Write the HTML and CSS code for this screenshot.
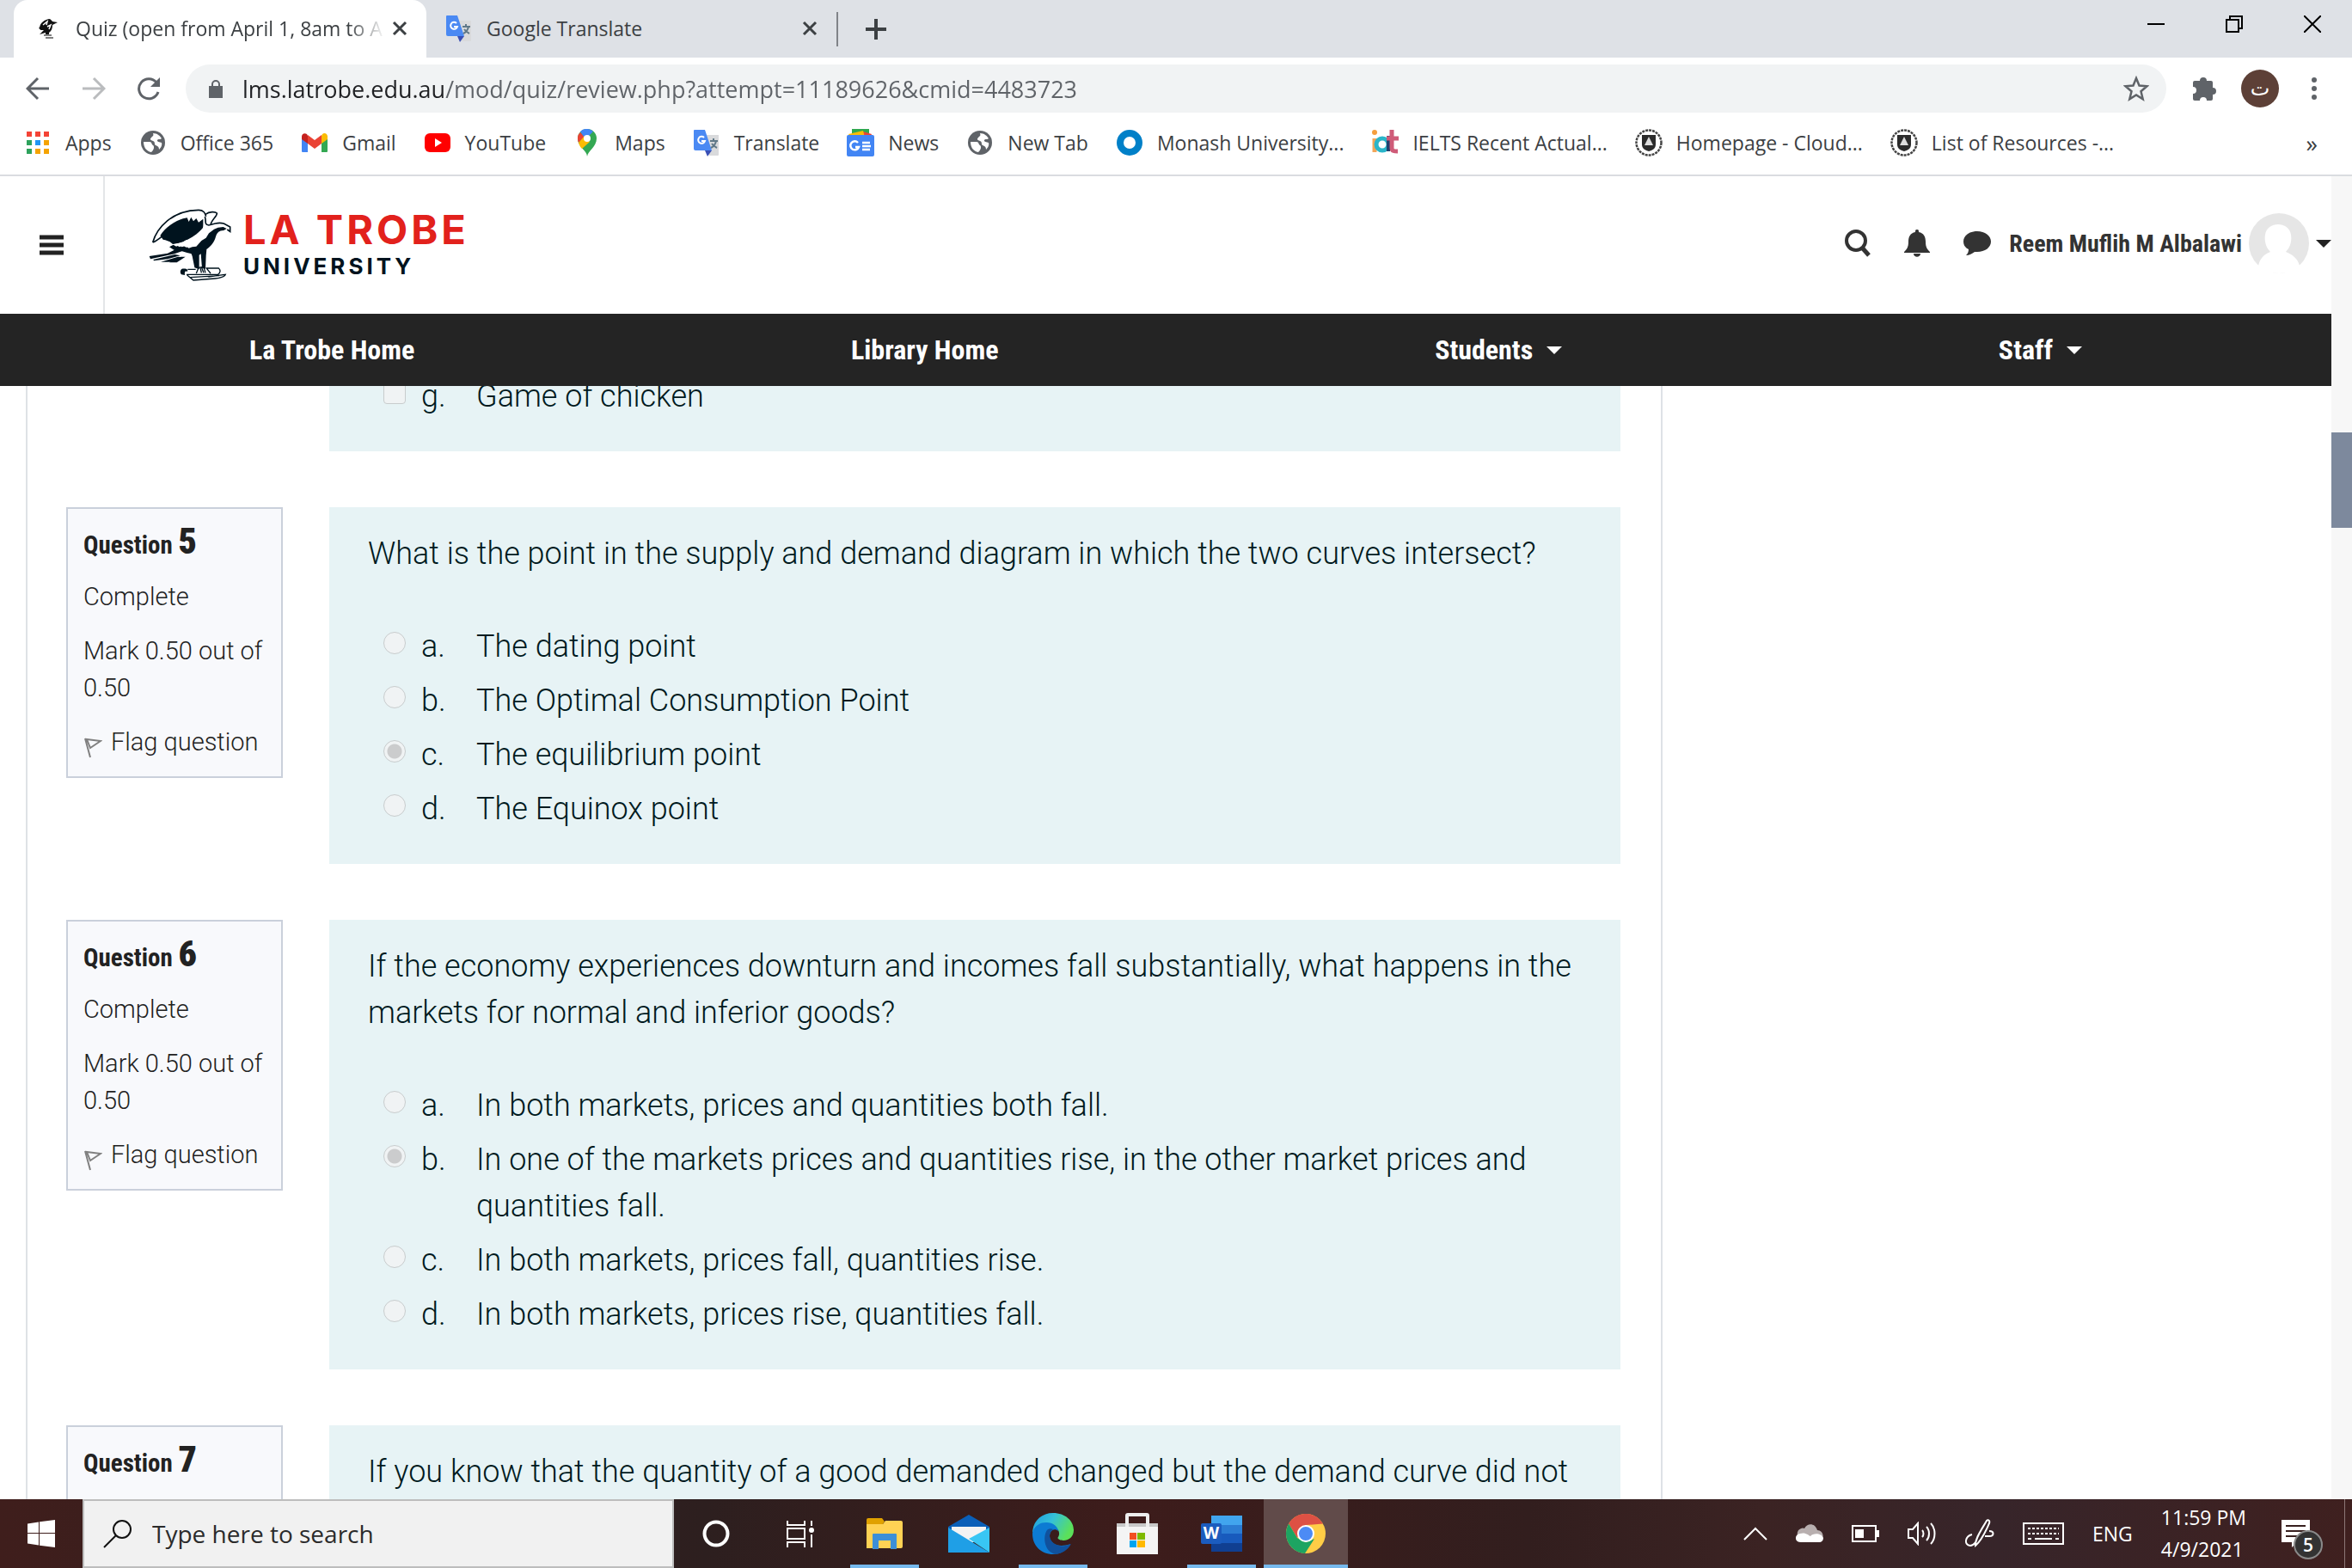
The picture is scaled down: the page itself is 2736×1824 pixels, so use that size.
FILE: index.html
```html
<!DOCTYPE html>
<html lang="en">
<head>
<meta charset="utf-8">
<title>Quiz (open from April 1, 8am to A</title>
<link rel="stylesheet" href="styles.css">
</head>
<body>
<svg class="defs" aria-hidden="true">
  <symbol id="i-close" viewBox="0 0 18 18"><path d="M2 2l14 14M16 2L2 16" stroke="currentColor" stroke-width="3" fill="none"/></symbol>
  <symbol id="i-translate" viewBox="0 0 32 32">
    <path d="M12 7h18v23a1 1 0 0 1-1 1H19z" fill="#d9dadc"/>
    <path d="M14 25h8l-5 7z" fill="#3a50b5"/>
    <path d="M2 1h12l8 24H3a2 2 0 0 1-2-2V2a1 1 0 0 1 1-1z" fill="#4a89f3"/>
    <path d="M20 14h9M24 11v3M27 14c-1 5-4 7-6 8M22 17c2 3 4 4 6 5" stroke="#607988" stroke-width="2" fill="none"/>
    <path d="M13 10a4 4 0 1 0 1 4h-4" stroke="#fff" stroke-width="2" fill="none"/>
  </symbol>
  <symbol id="i-globe" viewBox="0 0 28 28">
    <circle cx="14" cy="14" r="14" fill="#5f6368"/>
    <path d="M3 13h7c3 0 2 3 4 4s1 6-2 8C6 24 3 19 3 13zM14 3c5 0 8 3 10 6-2 2-4 0-5 2s3 2 5 3c1 3-1 6-3 8 0-4-2-4-4-5s0-4-3-5-4-2-2-4 3-2 2-5z" fill="#fff"/>
  </symbol>
  <symbol id="i-crest" viewBox="0 0 32 32">
    <circle cx="16" cy="16" r="14.500" fill="#fff" stroke="#444" stroke-width="2.500" stroke-dasharray="3 1"/>
    <path d="M8 7h16v11c0 5-4 7-8 8-4-1-8-3-8-8z" fill="#2b2b2b"/>
    <path d="M16 9l5 10H11z" fill="#ddd"/>
  </symbol>
  <symbol id="i-flag" viewBox="0 0 22 24"><path d="M2 1l6 22M4 2l16 2L8 12z" stroke="#808080" stroke-width="2" fill="none"/></symbol>
</svg>

<header class="tabstrip">
  <div class="tab tab-active">
    <svg class="favicon" width="24" height="24" viewBox="0 0 24 24"><path d="M2 11c1-6 6-9 11-10 2 0 3 2 4 3l6 1-6 3c0 4-1 7-4 9v2H9v-2l-7 2 5-5c-3 0-4 1-6-3z" fill="#111"/><path d="M7 20h9M9 23h9" stroke="#555" stroke-width="1.500"/><path d="M6 8l5-4-1 4M11 10l4-2-2 5" stroke="#fff" stroke-width="1.500" fill="none"/></svg>
    <span class="tab-title tab-title-fade">Quiz (open from April 1, 8am to A</span>
    <button class="icon-btn" aria-label="Close tab"><svg width="18" height="18"><use href="#i-close"/></svg></button>
  </div>
  <div class="tab">
    <svg width="32" height="32"><use href="#i-translate"/></svg>
    <span class="tab-title">Google Translate</span>
    <button class="icon-btn" aria-label="Close tab"><svg width="18" height="18"><use href="#i-close"/></svg></button>
  </div>
  <button class="icon-btn new-tab" aria-label="New tab"><svg width="24" height="24" viewBox="0 0 24 24"><path d="M12 0v24M0 12h24" stroke="#3c4043" stroke-width="4"/></svg></button>
  <div class="window-controls">
    <button class="icon-btn" aria-label="Minimize"><svg width="20" height="20" viewBox="0 0 20 20"><path d="M0 10h20" stroke="#000" stroke-width="2"/></svg></button>
    <button class="icon-btn" aria-label="Restore"><svg width="20" height="20" viewBox="0 0 20 20"><path d="M1 5h14v14H1zM5 5V1h14v14h-4" stroke="#000" stroke-width="2" fill="none"/></svg></button>
    <button class="icon-btn" aria-label="Close"><svg width="20" height="20" viewBox="0 0 20 20"><path d="M0 0l20 20M20 0L0 20" stroke="#000" stroke-width="2"/></svg></button>
  </div>
</header>

<div class="toolbar">
  <button class="icon-btn" aria-label="Back"><svg width="28" height="28" viewBox="0 0 28 28"><path d="M27 14H3M14 2L2 14l12 12" stroke="#5f6368" stroke-width="3" fill="none"/></svg></button>
  <button class="icon-btn" aria-label="Forward"><svg width="28" height="28" viewBox="0 0 28 28"><path d="M1 14h24M14 2l12 12-12 12" stroke="#babcbe" stroke-width="3" fill="none"/></svg></button>
  <button class="icon-btn" aria-label="Reload"><svg width="28" height="28" viewBox="0 0 28 28"><path d="M22 7a11.500 11.500 0 1 0 2 11" stroke="#5f6368" stroke-width="3" fill="none"/><path d="M26 1v11H15z" fill="#5f6368"/></svg></button>
  <div class="omnibox">
    <svg width="18" height="22" viewBox="0 0 18 22"><path d="M1 8h16v14H1z" fill="#5f6368"/><path d="M5 9V6a4 4 0 0 1 8 0v3" stroke="#5f6368" stroke-width="2" fill="none"/></svg>
    <input class="url" type="text" aria-label="Address" value="lms.latrobe.edu.au/mod/quiz/review.php?attempt=11189626&amp;cmid=4483723">
    <button class="icon-btn" aria-label="Bookmark this page"><svg width="30" height="30" viewBox="0 0 30 30"><path d="M15 3l3.500 8.500 9 .7-7 6 2.200 9L15 22.400 7.300 27.200l2.200-9-7-6 9-.7z" stroke="#5f6368" stroke-width="2.500" fill="none"/></svg></button>
  </div>
  <button class="icon-btn" aria-label="Extensions"><svg width="30" height="30" viewBox="0 0 30 30"><path d="M1 8a2 2 0 0 1 2-2h6a4 4 0 1 1 8 0h5a2 2 0 0 1 2 2v6a4 4 0 1 1 0 8v5a2 2 0 0 1-2 2h-5a4 4 0 0 0-8 0H3a2 2 0 0 1-2-2v-6a4 4 0 0 0 0-8z" fill="#5f6368"/></svg></button>
  <button class="profile" aria-label="Profile">ت</button>
  <button class="icon-btn" aria-label="Menu"><svg width="8" height="28" viewBox="0 0 8 28"><circle cx="4" cy="4" r="3" fill="#5f6368"/><circle cx="4" cy="14" r="3" fill="#5f6368"/><circle cx="4" cy="24" r="3" fill="#5f6368"/></svg></button>
</div>

<nav class="bookmarks" aria-label="Bookmarks">
  <a href="#"><svg width="32" height="32" viewBox="0 0 32 32"><path d="M3 3h6v6H3zM13 3h6v6h-6zM23 3h6v6h-6z" fill="#f44336"/><path d="M3 13h6v6H3zM3 23h6v6H3z" fill="#2ea25c"/><path d="M13 13h6v6h-6z" fill="#2196f3"/><path d="M23 13h6v6h-6zM13 23h6v6h-6zM23 23h6v6h-6z" fill="#f5a300"/></svg>Apps</a>
  <a href="#"><svg width="32" height="28"><use href="#i-globe"/></svg>Office 365</a>
  <a href="#"><svg width="32" height="32" viewBox="0 0 32 32"><path d="M1 8v18a1 1 0 0 0 1 1h6V13z" fill="#4285f4"/><path d="M24 13v14h6a1 1 0 0 0 1-1V8z" fill="#34a853"/><path d="M24 8v9l7-5V9c0-4-4-5-6-3z" fill="#fbbc04"/><path d="M1 9v3l7 5V8L7 6C4 4 1 6 1 9z" fill="#c5221f"/><path d="M8 17V7l8 6 8-6v10l-8 6z" fill="#ea4335"/></svg>Gmail</a>
  <a href="#"><svg width="32" height="32" viewBox="0 0 32 32"><rect x="1" y="5" width="30" height="22" rx="6" fill="#f00"/><path d="M13 11l8 5-8 5z" fill="#fff"/></svg>YouTube</a>
  <a href="#"><svg width="32" height="32" viewBox="0 0 32 32"><path d="M16 32c0-7-11-11-11-21a11 11 0 0 1 22 0c0 10-10 14-11 21z" fill="#34a853"/><path d="M6 16C4 10 5 7 8 4l5 5z" fill="#ea4335"/><path d="M8 3c5-5 12-3 15 0l-9 9z" fill="#4285f4"/><path d="M6 16l7-8 6 7-9 8c-2-2-3-4-4-7z" fill="#fbbc04"/><circle cx="16" cy="11" r="4" fill="#fff"/></svg>Maps</a>
  <a href="#"><svg width="32" height="32"><use href="#i-translate"/></svg>Translate</a>
  <a href="#"><svg width="32" height="32" viewBox="0 0 32 32"><path d="M6 0h20v8H6z" fill="#2fa84f"/><path d="M19 3l10 3-2 5H12z" fill="#ea4335"/><path d="M2 6l17-4 2 8H4z" fill="#fbbc04"/><rect y="7" width="32" height="25" rx="2" fill="#4285f4"/><path d="M13 16a5 5 0 1 0 1 5h-4M18 16h9M18 20h10M18 24h9" stroke="#fff" stroke-width="2.500" fill="none"/></svg>News</a>
  <a href="#"><svg width="32" height="28"><use href="#i-globe"/></svg>New Tab</a>
  <a href="#"><svg width="32" height="32" viewBox="0 0 32 32"><circle cx="16" cy="16" r="11" fill="none" stroke="#0080c8" stroke-width="8"/></svg>Monash University...</a>
  <a href="#"><svg width="32" height="32" viewBox="0 0 32 32"><path d="M4 11v16" stroke="#f2a65a" stroke-width="5"/><circle cx="4" cy="4" r="3" fill="#f59e3d"/><circle cx="13" cy="18" r="7" fill="none" stroke="#2ab5c9" stroke-width="5"/><path d="M20 8v18" stroke="#22406e" stroke-width="4"/><path d="M24 1v21c0 4 3 4 7 4M18 11h14" stroke="#cf5b78" stroke-width="5" fill="none"/></svg>IELTS Recent Actual...</a>
  <a href="#"><svg width="32" height="32"><use href="#i-crest"/></svg>Homepage - Cloud...</a>
  <a href="#"><svg width="32" height="32"><use href="#i-crest"/></svg>List of Resources -...</a>
  <button class="icon-btn more" aria-label="More bookmarks">»</button>
</nav>

<div class="viewport">
  <div class="page">
    <header class="site-header">
      <button class="menu-btn" aria-label="Side panel"><svg width="28" height="24" viewBox="0 0 28 24"><path d="M0 3h28M0 12h28M0 21h28" stroke="#222" stroke-width="5"/></svg></button>
      <a class="logo" href="#" aria-label="La Trobe University">
        <svg width="96" height="86" viewBox="24 20 288 258">
          <path d="M38 140C52 90 104 28 198 27c18 0 22 10 26 22M38 140c14-6 26-16 36-24M222 42c14-10 34-10 40-4 2 10-22 26-22 42M220 50c6 16-4 28 14 30l22-6c10-2 22-2 30 0l22 12v16l-10-7" fill="none" stroke="#00131e" stroke-width="5"/>
          <path d="M64 116C82 86 120 60 158 54l6 14 8-16 8 14 10-10 8 14 16-12 0 18c0 20-6 36-22 46-14 8-26 10-38 10l-12 8-20 4-14 2-10-8-16-6-8-2-8-12z" fill="#00131e"/>
          <path d="M96 156l14-8 10 6 10-4 10 6 12-4 12 8 12-4 14-2 18-20 16-10 10-16 18-14 14-6 18-2 12 6-10 6c-16 0-24 8-28 22-6 22-20 38-44 52l-30 10-26-6-20-6-26-4z" fill="#00131e"/>
          <path d="M100 148c40-4 84-24 116-62l22-4-6 20c-16 20-30 42-52 52l-16-4-8 8-14-8-10 6-12-6z" fill="#fff"/>
          <path d="M26 188l64-10 28-14 30 4-34 12-84 18zM40 200l76-18 18 4-44 12-48 6zM66 208l60-18 18 2-46 16zM96 210l40-20 16 0-30 20z" fill="#00131e"/>
          <path d="M170 172l56-8-2 22-2 46-12-2-4-50-6 4 0 50-16-6-8-40z" fill="#00131e"/>
          <path d="M190 248l8-20 10-2 8 20M204 228l4 18M216 226l6 20M224 228l16 20M160 234l28 0M226 230h42c8 6 6 16-2 22H156M158 254l22 18 76-6c20-2 34-8 36-14l-60 8M170 262l100-6" stroke="#00131e" stroke-width="4" fill="none"/>
          <path d="M140 232c20-2 22 6 18 10-6-4-10 0-8 12l-12-2c-6-8-4-16 2-20z" fill="#00131e"/>
        </svg>
        <span class="logo-text"><span class="logo-name">LA TROBE</span><span class="logo-sub">UNIVERSITY</span></span>
      </a>
      <div class="user-tools">
        <button class="icon-btn" aria-label="Search"><svg width="30" height="32" viewBox="0 0 30 32"><circle cx="13" cy="13" r="11" stroke="#333" stroke-width="4" fill="none"/><path d="M20 21l8 9" stroke="#333" stroke-width="5"/></svg></button>
        <button class="icon-btn" aria-label="Notifications"><svg width="30" height="32" viewBox="0 0 30 32"><path d="M15 0c2 0 2 1 2 3 6 1 8 6 8 11 0 7 2 9 5 12v1H0v-1c3-3 5-5 5-12 0-5 2-10 8-11 0-2 0-3 2-3zM11 28h8c0 5-8 5-8 0z" fill="#333"/></svg></button>
        <button class="icon-btn" aria-label="Messages"><svg width="32" height="28" viewBox="0 0 32 28"><path d="M16 0c9 0 16 5 16 12s-7 12-16 12h-3c-3 2-6 4-10 4 2-2 3-4 3-7-4-2-6-5-6-9C0 5 7 0 16 0z" fill="#333"/></svg></button>
        <button class="user-menu">Reem Muflih M Albalawi
          <svg width="70" height="70" viewBox="0 0 70 70"><circle cx="35" cy="35" r="35" fill="#e6e6e6"/><path d="M11 61c2-8 6-13 14-16-6-6-7-14-6-20 2-16 28-16 30 0 1 6 0 14-6 20 8 3 14 8 16 16-6 12-42 12-48 0z" fill="#fff"/></svg>
          <svg width="18" height="9" viewBox="0 0 18 9"><path d="M0 0h18L9 9z" fill="#222"/></svg>
        </button>
      </div>
    </header>
    <nav class="site-nav" aria-label="Site">
      <a href="#">La Trobe Home</a>
      <a href="#">Library Home</a>
      <a href="#">Students <svg width="18" height="9" viewBox="0 0 18 9"><path d="M0 0h18L9 9z" fill="#fff"/></svg></a>
      <a href="#">Staff <svg width="18" height="9" viewBox="0 0 18 9"><path d="M0 0h18L9 9z" fill="#fff"/></svg></a>
    </nav>
    <main class="quiz">
      <section class="questions">
        <article class="question question-cut">
          <div class="formulation">
            <div class="answer"><input type="checkbox" id="q4g" disabled><label for="q4g"><span>g.</span><span>Game of chicken</span></label></div>
          </div>
        </article>
        <article class="question">
          <aside class="info"><h3>Question <b>5</b></h3><p>Complete</p><p>Mark 0.50 out of 0.50</p><a href="#"><svg width="22" height="30"><use href="#i-flag"/></svg>Flag question</a></aside>
          <div class="formulation">
            <p>What is the point in the supply and demand diagram in which the two curves intersect?</p>
            <div class="answer"><input type="radio" name="q5" id="q5a" disabled><label for="q5a"><span>a.</span><span>The dating point</span></label></div>
            <div class="answer"><input type="radio" name="q5" id="q5b" disabled><label for="q5b"><span>b.</span><span>The Optimal Consumption Point</span></label></div>
            <div class="answer"><input type="radio" name="q5" id="q5c" disabled checked><label for="q5c"><span>c.</span><span>The equilibrium point</span></label></div>
            <div class="answer"><input type="radio" name="q5" id="q5d" disabled><label for="q5d"><span>d.</span><span>The Equinox point</span></label></div>
          </div>
        </article>
        <article class="question">
          <aside class="info"><h3>Question <b>6</b></h3><p>Complete</p><p>Mark 0.50 out of 0.50</p><a href="#"><svg width="22" height="30"><use href="#i-flag"/></svg>Flag question</a></aside>
          <div class="formulation">
            <p>If the economy experiences downturn and incomes fall substantially, what happens in the markets for normal and inferior goods?</p>
            <div class="answer"><input type="radio" name="q6" id="q6a" disabled><label for="q6a"><span>a.</span><span>In both markets, prices and quantities both fall.</span></label></div>
            <div class="answer"><input type="radio" name="q6" id="q6b" disabled checked><label for="q6b"><span>b.</span><span>In one of the markets prices and quantities rise, in the other market prices and quantities fall.</span></label></div>
            <div class="answer"><input type="radio" name="q6" id="q6c" disabled><label for="q6c"><span>c.</span><span>In both markets, prices fall, quantities rise.</span></label></div>
            <div class="answer"><input type="radio" name="q6" id="q6d" disabled><label for="q6d"><span>d.</span><span>In both markets, prices rise, quantities fall.</span></label></div>
          </div>
        </article>
        <article class="question question-last">
          <aside class="info"><h3>Question <b>7</b></h3></aside>
          <div class="formulation">
            <p>If you know that the quantity of a good demanded changed but the demand curve did not</p>
          </div>
        </article>
      </section>
    </main>
  </div>
  <div class="scrollbar"><div class="thumb"></div></div>
</div>

<footer class="taskbar">
  <button class="start" aria-label="Start"><svg width="32" height="32" viewBox="0 0 32 32"><path d="M0 4.500L13 2.500V15H0zM14 2.300L32 0v15H14zM0 16h13v13.500L0 27.500zM14 16h18v16l-18-2.300z" fill="#fff"/></svg></button>
  <label class="search">
    <svg width="34" height="34" viewBox="0 0 34 34"><circle cx="22" cy="12" r="10" stroke="#111" stroke-width="2" fill="none"/><path d="M15 19L1 33" stroke="#111" stroke-width="2"/></svg>
    <input type="text" placeholder="Type here to search" aria-label="Search">
  </label>
  <div class="apps">
    <button aria-label="Cortana"><svg width="32" height="32" viewBox="0 0 32 32"><circle cx="16" cy="16" r="13.500" stroke="#fff" stroke-width="4" fill="none"/></svg></button>
    <button aria-label="Task view"><svg width="32" height="32" viewBox="0 0 32 32"><path d="M1 1v5h20V1M1 10h20v12H1zM1 32v-6h20v6M29 1v6M29 17v15" stroke="#fff" stroke-width="2" fill="none"/><circle cx="29" cy="12" r="3" fill="#fff"/></svg></button>
    <button class="running" aria-label="File Explorer"><svg width="44" height="36" viewBox="0 0 44 36"><path d="M1 2a2 2 0 0 1 2-2h16l3 4-3 4H1z" fill="#e0a100"/><path d="M1 7h19l3-4h18a2 2 0 0 1 2 2v28a2 2 0 0 1-2 2H1z" fill="#ffd254"/><path d="M8 36V19a1 1 0 0 1 1-1h26a1 1 0 0 1 1 1v17h-7V26H15v10z" fill="#3c8fd8"/></svg></button>
    <button aria-label="Mail"><svg width="48" height="48" viewBox="0 0 48 48"><path d="M0 16L24 2l24 14v6H0z" fill="#0a5fb8"/><path d="M4 16h40v12L24 36 4 28z" fill="#f3f3f3"/><path d="M48 17v29L24 30z" fill="#38c6f4"/><path d="M0 17l48 29H0z" fill="#1f9fe6"/></svg></button>
    <button class="running" aria-label="Edge"><svg width="48" height="48" viewBox="0 0 48 48"><defs><linearGradient id="eg" x1="0" x2="1" y1="0" y2="0.400"><stop offset="0" stop-color="#1c9be0"/><stop offset=".5" stop-color="#35c1d8"/><stop offset="1" stop-color="#5be05a"/></linearGradient></defs><path d="M0 24C0 10 10 0 24 0s24 9 24 20c0 8-6 12-12 12-4 0-8-2-6-4 3-5 0-12-9-13C9 14 1 18 0 24z" fill="url(#eg)"/><path d="M0 24c1-8 8-13 16-13 9 0 14 6 14 10-4-4-10-1-10 6 0 9 11 14 24 9-4 8-12 12-20 12C10 48 0 38 0 24z" fill="#0c7bd3"/><path d="M18 19c-6 5-6 26 9 29 8-1 14-5 18-12-12 6-24 0-25-9 0-4 2-6 4-8-2-1-4-1-6 0z" fill="#10519d"/></svg></button>
    <button aria-label="Store"><svg width="48" height="48" viewBox="0 0 48 48"><path d="M0 12h48v6H0z" fill="#c8c8c8"/><path d="M12 16V3a1 1 0 0 1 1-1h22a1 1 0 0 1 1 1v13" stroke="#eee" stroke-width="4" fill="none"/><path d="M0 16h48v32H0z" fill="#f4f4f4"/><path d="M15 23h8v8h-8z" fill="#f25022"/><path d="M24 23h9v8h-9z" fill="#7fba00"/><path d="M15 32h8v8h-8z" fill="#00a4ef"/><path d="M24 32h9v8h-9z" fill="#ffb900"/></svg></button>
    <button class="running" aria-label="Word"><svg width="48" height="42" viewBox="0 0 48 42"><path d="M12 0h36v11H12z" fill="#41a5ee"/><path d="M12 11h36v10H12z" fill="#2b7cd3"/><path d="M12 21h36v11H12z" fill="#185abd"/><path d="M12 32h36v10H12z" fill="#103f91"/><rect y="9" width="24" height="24" rx="2" fill="#1b5cbe"/><text x="12" y="27" class="word-letter">W</text></svg></button>
    <button class="running active" aria-label="Chrome"><svg width="46" height="46" viewBox="0 0 46 46"><circle cx="23" cy="23" r="23" fill="#ffcd46"/><path d="M3.100 11.500A23 23 0 0 1 43 11.500L23 13 13 28z" fill="#dd5144"/><path d="M3.100 11.500A23 23 0 0 0 22 46l11-17-10 4-10-5z" fill="#1da462"/><circle cx="23" cy="23" r="10" fill="#fff"/><circle cx="23" cy="23" r="8" fill="#4c8bf5"/></svg></button>
  </div>
  <div class="tray">
    <button aria-label="Show hidden icons"><svg width="28" height="16" viewBox="0 0 28 16"><path d="M1 15L14 2l13 13" stroke="#fff" stroke-width="2" fill="none"/></svg></button>
    <button aria-label="OneDrive"><svg width="32" height="22" viewBox="0 0 32 22"><path d="M2 14C0 6 8 3 10 5c3-6 12-7 15 2 5 0 8 5 6 10z" fill="#b8afaf"/><path d="M6 21c-8 0-8-9-1-10 6-2 10 2 12 3 3-4 13-4 15 2 0 3-2 5-5 5z" fill="#fff"/></svg></button>
    <button aria-label="Battery"><svg width="32" height="20" viewBox="0 0 32 20"><path d="M1 1h27v18H1z" stroke="#fff" stroke-width="2" fill="none"/><path d="M4 5h10v10H4zM29 6h3v8h-3z" fill="#fff"/></svg></button>
    <button aria-label="Volume"><svg width="34" height="28" viewBox="0 0 34 28"><path d="M1 9h5l6-7v24l-6-7H1zM17 10c2 2 2 6 0 8M22 6c4 4 4 12 0 16M27 2c6 6 6 18 0 24" stroke="#fff" stroke-width="2" fill="none"/></svg></button>
    <button aria-label="Windows Ink"><svg width="34" height="34" viewBox="0 0 34 34"><path d="M12 31c-1-8 8-20 13-29 2-2 4 0 3 3-4 9-8 19-16 26zM8 18c-8 2-10 12-2 13 4 0 5-3 7-5M28 14c6 0 6 6 0 6h-5" stroke="#fff" stroke-width="2" fill="none"/></svg></button>
    <button aria-label="Touch keyboard"><svg width="48" height="26" viewBox="0 0 48 26"><path d="M1 1h46v24H1z" stroke="#fff" stroke-width="2" fill="none"/><path d="M6 7h36M6 13h36" stroke="#fff" stroke-width="2" stroke-dasharray="3 2"/><path d="M6 19h4M14 19h20M38 19h4" stroke="#fff" stroke-width="2"/></svg></button>
    <button class="lang">ENG</button>
    <button class="clock"><span>11:59 PM</span><span>4/9/2021</span></button>
    <button class="notify" aria-label="Notifications"><svg width="34" height="32" viewBox="0 0 34 32"><path d="M0 0h33v26H18l-6 6v-6H0z" fill="#fff"/><path d="M5 7h23M5 13h23M5 19h14" stroke="#38201f" stroke-width="2"/></svg><span class="badge">5</span></button>
  </div>
</footer>
</body>
</html>
```
FILE: styles.css
```css
* { box-sizing: border-box; }
body {
  margin: 0;
  height: 100vh;
  display: flex;
  flex-direction: column;
  overflow: hidden;
  background: #fff;
  font-family: "Open Sans", "Noto Sans", sans-serif;
  font-size: 23px;
  color: #3c4043;
}
button { border: 0; background: none; padding: 0; font: inherit; color: inherit; }
a { color: inherit; text-decoration: none; }
svg { flex: none; display: block; }
h3, p { margin: 0; }
.defs { position: absolute; width: 0; height: 0; }
.icon-btn { display: flex; align-items: center; justify-content: center; }

/* Tab strip */
.tabstrip { display: flex; height: 67px; background: #dee1e6; padding-left: 16px; flex: none; }
.tab { display: flex; align-items: center; width: 477px; padding: 0 22px 2px; }
.tab-active { width: 480px; background: #fff; border-radius: 16px 16px 0 0; padding: 0 22px 2px 28px; }
.tab-title { flex: 1; margin: 0 24px 0 16px; white-space: nowrap; }
.tab-active .tab-title { margin: 0 8px 0 20px; }
.tab-title-fade { mask-image: linear-gradient(90deg, #000 88%, transparent 100%); }
.new-tab { align-self: center; height: 40px; width: 90px; border-left: 2px solid #808388; }
.window-controls { margin-left: auto; display: flex; gap: 71px; padding: 18px 36px 0 0; align-items: flex-start; }

/* Toolbar */
.toolbar { display: flex; align-items: center; height: 72px; padding: 0 40px 0 30px; flex: none; gap: 37px; }
.omnibox { flex: 1; display: flex; align-items: center; height: 56px; border-radius: 28px; background: #f1f3f4; padding: 0 20px 0 26px; margin: 0 -7px 0 -9px; }
.url {
  flex: 1;
  margin-left: 22px;
  padding: 0;
  border: 0;
  font: inherit;
  font-size: 27px;
  color: transparent;
  background: linear-gradient(90deg, #202124 236px, #5f6368 236px);
  background-clip: text;
}
.profile { width: 44px; height: 44px; border-radius: 50%; background: #5d4037; color: #fff; margin-left: -10px; font-family: "DejaVu Sans", sans-serif; font-size: 24px; line-height: 36px; text-align: center; }

/* Bookmarks */
.bookmarks { display: flex; align-items: center; gap: 32px; height: 66px; padding: 0 40px 10px 28px; border-bottom: 2px solid #dadce0; flex: none; }
.bookmarks a { display: flex; align-items: center; gap: 16px; white-space: nowrap; }
.more { margin-left: auto; font-size: 27px; }

/* Web page */
.viewport { flex: 1; display: flex; min-height: 0; }
.page { flex: 1; min-width: 0; overflow: hidden; font-family: "Roboto Condensed", Roboto, sans-serif; }
.scrollbar { width: 24px; background: #f7f7f7; padding-top: 298px; }
.thumb { height: 111px; background: #7d899d; }
.site-header { display: flex; height: 160px; align-items: stretch; }
.menu-btn { width: 122px; border-right: 2px solid #e4e6e8; display: grid; place-items: center; }
.logo { display: flex; align-items: center; gap: 14px; padding-left: 51px; }
.logo-text { display: flex; flex-direction: column; font-family: Inter, sans-serif; font-weight: 700; gap: 6px; letter-spacing: 4px; }
.logo-name { font-size: 47px; line-height: 44px; color: #e2211c; }
.logo-sub { font-size: 26px; line-height: 30px; color: #00131e; }
.user-tools { margin-left: auto; display: flex; align-items: center; gap: 39px; padding-bottom: 4px; color: #333; }
.user-menu { display: flex; align-items: center; gap: 8px; font-size: 28px; font-weight: 700; margin-left: -18px; white-space: nowrap; }
.site-nav { position: relative; z-index: 1; display: flex; align-items: center; justify-content: space-between; height: 84px; padding: 0 290px; background: #242424; color: #fff; font-size: 32px; font-weight: 700; }
.site-nav a { display: flex; align-items: center; gap: 16px; }

/* The list is scrolled, so its first row starts under the site navigation */
.quiz { margin-top: -42px; padding-left: 30px; }
.questions { width: 71%; padding: 0 47px 0 45px; border: 2px solid #dee2e6; border-width: 0 2px; font-family: Roboto, sans-serif; font-weight: 300; display: flex; flex-direction: column; gap: 65px; }
.question { display: grid; grid-template-columns: 252px 1fr; gap: 54px; align-items: start; }
.question-cut .formulation { grid-column: 2; }
.question-last { align-items: stretch; }
.info { border: 2px solid #cad0db; background: #f8f9fc; padding: 23px 18px 18px; font-size: 29px; line-height: 43px; color: #222; display: flex; flex-direction: column; gap: 20px; }
.info h3 { font-family: "Roboto Condensed", Roboto, sans-serif; font-size: 29px; font-weight: 700; line-height: 38px; }
.info h3 b { font-size: 42px; line-height: 24px; }
.info a { display: flex; align-items: flex-end; gap: 10px; white-space: nowrap; }
.formulation { background: #e7f3f5; color: #001a1e; padding: 27px 45px 28px; font-size: 36px; line-height: 54px; }
.formulation p { margin-bottom: 54px; }
.answer { display: flex; align-items: flex-start; gap: 18px; padding-left: 18px; }
.answer + .answer { margin-top: 9px; }
.answer:last-child { margin-bottom: 9px; }
.answer input { appearance: none; flex: none; width: 26px; height: 26px; margin: 10px 0 0; border: 1px solid #c8cccd; background: #f0f3f4; border-radius: 4px; }
.answer input[type="radio"] { border-radius: 50%; }
.answer input:checked { background: radial-gradient(circle, #cbcccd 8px, #f0f3f4 9px); }
.answer label { display: grid; grid-template-columns: 64px 1fr; }

/* Taskbar */
.taskbar { display: flex; height: 80px; flex: none; background: linear-gradient(90deg, #3f1e1c, #2d1f1f 30%, #3d1c1b 48%, #321e1e 65%, #3b2323 75%, #37252a 85%, #3f201f); color: #fff; }
.start { width: 96px; display: grid; place-items: center; }
.search { width: 688px; display: flex; align-items: center; gap: 23px; padding: 0 22px; background: #f1f1f1; border: 2px solid #bdbdbd; }
.search input { flex: 1; border: 0; padding: 0; background: none; font: inherit; font-size: 28px; }
.search input::placeholder { color: #2b2b2b; opacity: 1; }
.apps { display: flex; }
.apps button { width: 98px; display: grid; place-items: center; }
.running { background: linear-gradient(#76b9ed, #76b9ed) center bottom / 80px 4px no-repeat; }
.apps .active { background: linear-gradient(#76b9ed, #76b9ed) center bottom / 100% 4px no-repeat, #614b4a; }
.word-letter { font: 700 19px "Open Sans", sans-serif; fill: #fff; text-anchor: middle; }
.tray { margin-left: auto; display: flex; align-items: center; gap: 33px; padding-right: 7px; margin-right: 8px; border-right: 1px solid #8d7877; }
.lang { font-size: 23px; }
.clock { display: flex; flex-direction: column; align-items: flex-start; line-height: 37px; }
.notify { position: relative; margin: 0 32px 0 8px; }
.badge { position: absolute; left: 14px; top: 12px; width: 34px; height: 34px; border-radius: 50%; border: 2px solid #8a8a8a; background: #333; font-size: 21px; font-weight: 600; line-height: 30px; text-align: center; }
```
